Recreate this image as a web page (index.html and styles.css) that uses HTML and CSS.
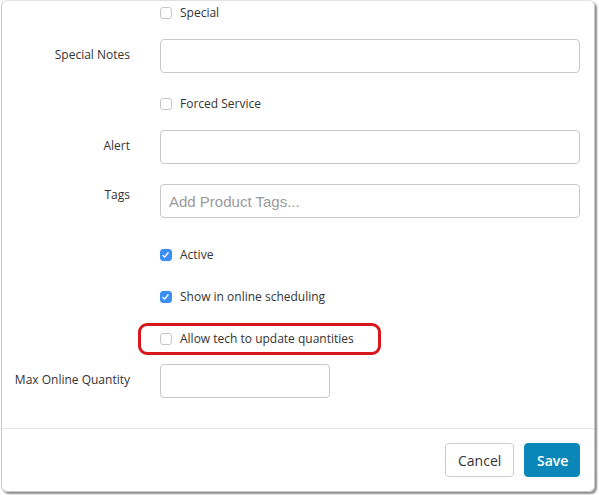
FILE: index.html
```html
<!DOCTYPE html>
<html>
<head>
<meta charset="utf-8">
<link rel="stylesheet" href="styles.css">
</head>
<body>
<div class="modal">
  <div class="modal-body">
    <div class="row check-row">
      <span class="label"></span>
      <label class="check"><span class="box"></span>Special</label>
    </div>
    <div class="row">
      <span class="label">Special Notes</span>
      <input class="input" type="text">
    </div>
    <div class="row check-row after-input">
      <span class="label"></span>
      <label class="check"><span class="box"></span>Forced Service</label>
    </div>
    <div class="row">
      <span class="label">Alert</span>
      <input class="input" type="text">
    </div>
    <div class="row tags-row">
      <span class="label label-top">Tags</span>
      <input class="input tags" type="text" placeholder="Add Product Tags...">
    </div>
    <div class="row check-row after-tags">
      <span class="label"></span>
      <label class="check"><span class="box checked"><svg viewBox="0 0 12 12" width="12" height="12"><path d="M3.2 6.4 L5.1 8.3 L8.8 3.6" fill="none" stroke="#fff" stroke-width="1.5" stroke-linecap="round" stroke-linejoin="round"/></svg></span>Active</label>
    </div>
    <div class="row check-row after-check">
      <span class="label"></span>
      <label class="check"><span class="box checked"><svg viewBox="0 0 12 12" width="12" height="12"><path d="M3.2 6.4 L5.1 8.3 L8.8 3.6" fill="none" stroke="#fff" stroke-width="1.5" stroke-linecap="round" stroke-linejoin="round"/></svg></span>Show in online scheduling</label>
    </div>
    <div class="row check-row after-check">
      <span class="label"></span>
      <label class="check highlight"><span class="box"></span>Allow tech to update quantities<span class="ring"></span></label>
    </div>
    <div class="row max-row">
      <span class="label">Max Online Quantity</span>
      <input class="input short" type="text">
    </div>
  </div>
  <div class="modal-footer">
    <button class="btn btn-default">Cancel</button>
    <button class="btn btn-primary">Save</button>
  </div>
</div>
</body>
</html>
```
FILE: styles.css
```css
* { box-sizing: border-box; }
html, body { margin: 0; padding: 0; background: #fff; }
body {
  font-family: "Open Sans", "DejaVu Sans", sans-serif;
  font-size: 12px;
  color: #333;
  width: 599px;
  height: 495px;
  overflow: hidden;
}
.modal {
  margin-left: 1px;
  width: 594px;
  height: 492px;
  border: 1px solid #c9c9c9;
  border-top-color: #e2e2e2;
  border-radius: 6px;
  box-shadow: 2px 2px 2px rgba(0,0,0,0.45);
  display: flex;
  flex-direction: column;
}
.modal-body {
  padding: 2px 13px 0 0;
  display: flex;
  flex-direction: column;
  gap: 16px;
  height: 427px;
}
.row {
  display: grid;
  grid-template-columns: 128px 420px;
  column-gap: 30px;
  align-items: center;
}
.label {
  text-align: right;
  line-height: 17px;
  white-space: nowrap;
  padding-bottom: 4px;
}
.label-top { align-self: start; padding-top: 2px; padding-bottom: 0; }
.check-row { height: 20px; }
.after-input { margin-top: 5px; }
.tags-row { margin-top: 4px; }
.after-tags { margin-top: 11px; }
.after-check { margin-top: 6px; }
.max-row { margin-top: -1px; }
.check {
  display: flex;
  align-items: center;
  gap: 8px;
  line-height: 20px;
  position: relative;
}
.box {
  width: 12px;
  height: 12px;
  border: 1px solid #c6c6c6;
  border-radius: 3px;
  background: #fff;
  display: inline-flex;
  flex: none;
}
.box.checked {
  background: #3a8ef6;
  border-color: #3a8ef6;
}
.box.checked svg { margin: -1px 0 0 -1px; }
.input {
  height: 34px;
  border: 1px solid #c8c8c8;
  border-radius: 4px;
  padding: 0 8px;
  font-family: "Liberation Sans", Arial, sans-serif;
  font-size: 15px;
  color: #333;
  background: #fff;
  width: 100%;
}
.input::placeholder { color: #9a9a9a; }
.short { width: 170px; }
.ring {
  position: absolute;
  left: -22px;
  top: -6px;
  width: 243px;
  height: 32px;
  border: 3px solid #d8161d;
  border-radius: 9px;
}
.modal-footer {
  border-top: 1px solid #e5e5e5;
  padding: 14px 14px 0 0;
  display: flex;
  justify-content: flex-end;
  gap: 10px;
}
.btn {
  height: 34px;
  padding: 0 12px;
  font-family: "Open Sans", sans-serif;
  font-size: 14px;
  border-radius: 4px;
  border: 1px solid #ccc;
}
.btn-default { background: #fff; color: #333; width: 69px; }
.btn-primary {
  background: #0b86b8;
  border-color: #0b86b8;
  color: #fff;
  font-weight: 600;
  width: 56px;
}
```
